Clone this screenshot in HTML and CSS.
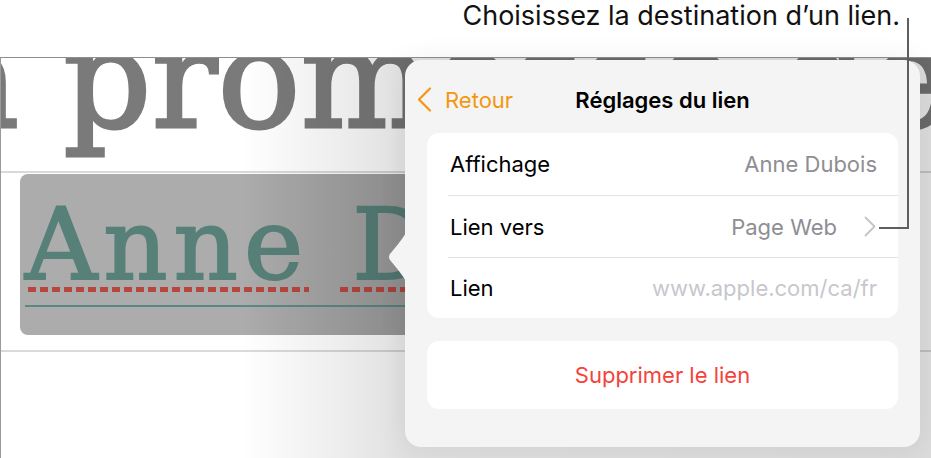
FILE: index.html
```html
<!DOCTYPE html>
<html lang="fr">
<head>
<meta charset="utf-8">
<title>Réglages du lien</title>
<link rel="stylesheet" href="styles.css">
</head>
<body>
  <header class="caption"><p>Choisissez la destination d’un lien.</p></header>

  <main class="doc">
    <div class="para para-title">a promesse de la vie</div>
    <div class="para para-name">
      <div class="selection"><span class="name"><span class="word">Anne</span><span class="word word-2">Dubois</span></span></div>
    </div>
  </main>

  <section class="popover">
    <svg class="pop-arrow" width="18" height="48" viewBox="0 0 18 48"><path d="M18 0 C 13 8 7 15 2 21 Q 0 24 2 27 C 7 33 13 40 18 48 Z" fill="#f4f4f4"/></svg>
    <div class="pop-head">
      <div class="back">
        <svg width="15" height="25" viewBox="0 0 15 25"><path d="M13 1.5 L2 12.5 L13 23.5" fill="none" stroke="#f5960f" stroke-width="2.2" stroke-linecap="round" stroke-linejoin="round"/></svg>
        <span>Retour</span>
      </div>
      <h1 class="pop-title">Réglages du lien</h1>
      <div></div>
    </div>
    <div class="group">
      <div class="row"><span class="label">Affichage</span><span class="value">Anne Dubois</span></div>
      <div class="row row-nav"><span class="label">Lien vers</span><span class="value nav"><span>Page Web</span><svg width="12" height="21" viewBox="0 0 12 21"><path d="M1.5 1.5 L10.5 10.5 L1.5 19.5" fill="none" stroke="#c4c4c7" stroke-width="1.8" stroke-linecap="round" stroke-linejoin="round"/></svg></span></div>
      <div class="row row-last"><span class="label">Lien</span><span class="value placeholder">www.apple.com/ca/fr</span></div>
    </div>
    <div class="delete">Supprimer le lien</div>
  </section>

  <div class="callout-v"></div>
  <div class="callout-h"></div>
</body>
</html>
```
FILE: styles.css
```css
* { box-sizing: border-box; }
html, body { margin: 0; padding: 0; }
body {
  width: 931px;
  height: 458px;
  overflow: hidden;
  position: relative;
  background: #fff;
  font-family: Inter, "Noto Sans", sans-serif;
  color: #000;
}

.caption {
  height: 57px;
  padding: 1px 31px 0 0;
  text-align: right;
  font-size: 27px;
  line-height: 30px;
  color: #111;
}
.caption p { margin: 0; }

.doc {
  position: relative;
  height: 401px;
  border-top: 1px solid #8e8e8e;
  border-left: 1px solid #9a9a9a;
  overflow: hidden;
}
.doc::after {
  content: "";
  position: absolute;
  inset: 0;
  background: linear-gradient(to right, rgba(0,0,0,0) 240px, rgba(0,0,0,0.07) 340px, rgba(0,0,0,0.12) 404px, rgba(0,0,0,0.14) 100%);
  pointer-events: none;
}

.para-title {
  height: 115px;
  overflow: hidden;
  border-bottom: 2px solid #d9d9d9;
  font-family: "DejaVu Serif", serif;
  font-size: 138px;
  line-height: 44px;
  color: #7a7a7a;
  -webkit-text-stroke: 3px #7a7a7a;
  white-space: nowrap;
  text-indent: -64px;
}

.para-name {
  height: 179px;
  padding: 1px 0 0 19px;
  border-bottom: 2px solid #dadada;
}
.selection {
  width: 420px;
  height: 161px;
  border-radius: 8px;
  background: linear-gradient(to right, #acacac 220px, #9b9b9b 100%);
  padding: 21px 0 0 5px;
  font-family: "DejaVu Serif", serif;
  font-size: 100px;
  line-height: 100px;
  color: #578079;
  -webkit-text-stroke: 2px #578079;
  white-space: nowrap;
  overflow: hidden;
}
.name {
  display: inline-block;
  padding-bottom: 10px;
  border-bottom: 2px solid #5b8982;
  letter-spacing: 6px;
}
.word {
  background-image: linear-gradient(to right, #b8463e 8px, transparent 8px);
  background-size: 12px 5px;
  background-repeat: repeat-x;
  background-position: 3px calc(100% - 11px);
}
.word-2 { margin-left: 28px; padding-left: 15px; }

.popover {
  position: absolute;
  left: 405px;
  top: 60px;
  width: 515px;
  height: 387px;
  background: #f4f4f4;
  border-radius: 16px;
  box-shadow: 0 2px 30px rgba(0,0,0,0.08);
  z-index: 2;
}
.pop-arrow {
  position: absolute;
  left: -17px;
  top: 173px;
}
.pop-head {
  height: 73px;
  padding: 6px 12px 0 12px;
  display: grid;
  grid-template-columns: 1fr auto 1fr;
  align-items: center;
}
.back {
  display: flex;
  align-items: center;
  gap: 13px;
  color: #f5960f;
  font-size: 22px;
}
.back svg { display: block; }
.pop-title {
  margin: 0;
  font-size: 22px;
  font-weight: 600;
  color: #000;
}

.group {
  margin: 0 22px 0 22px;
  background: #fff;
  border-radius: 12px;
}
.row {
  height: 62px;
  margin-left: 21px;
  padding: 0 21px 0 2px;
  display: flex;
  align-items: center;
  justify-content: space-between;
  font-size: 22px;
}
.row + .row { border-top: 1px solid #e2e2e4; }
.row-last { height: 61px; }
.row-nav { padding-right: 22px; }
.label { color: #000; }
.value { color: #8e8e93; }
.value.nav { display: flex; align-items: center; gap: 27px; }
.value.nav svg { display: block; }
.placeholder { color: #c7c7cc; }

.delete {
  margin: 23px 22px 0 22px;
  height: 68px;
  background: #fff;
  border-radius: 12px;
  display: flex;
  align-items: center;
  justify-content: center;
  color: #f4433a;
  font-size: 22px;
}

.callout-v {
  position: absolute;
  left: 907px;
  top: 18px;
  width: 2px;
  height: 211px;
  background: #5e5e5e;
  z-index: 3;
}
.callout-h {
  position: absolute;
  left: 879px;
  top: 227px;
  width: 30px;
  height: 2px;
  background: #5e5e5e;
  z-index: 3;
}
```
